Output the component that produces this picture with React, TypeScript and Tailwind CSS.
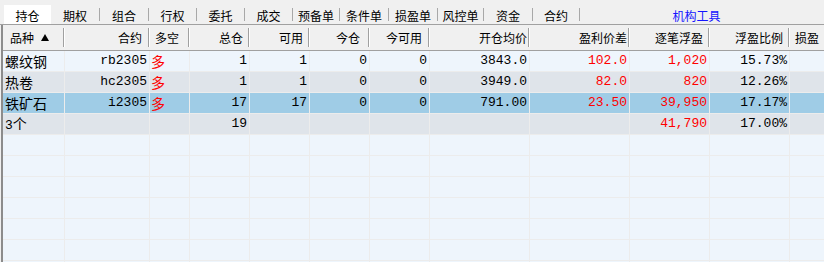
import React from "react";

const CJK = "font-['Noto_Sans_CJK_SC',sans-serif]";
const DATA = "font-['Liberation_Mono','Noto_Sans_CJK_SC',monospace]";

const tabs: { label: string; w: string }[] = [
  { label: "期权", w: "w-[48px]" },
  { label: "组合", w: "w-[48px]" },
  { label: "行权", w: "w-[47px]" },
  { label: "委托", w: "w-[47px]" },
  { label: "成交", w: "w-[47px]" },
  { label: "预备单", w: "w-[46px]" },
  { label: "条件单", w: "w-[48px]" },
  { label: "损盈单", w: "w-[48px]" },
  { label: "风控单", w: "w-[45px]" },
  { label: "资金", w: "w-[48px]" },
  { label: "合约", w: "w-[46px]" },
];

type Col = { label: string; w: string; left?: boolean; pad: string };
const cols: Col[] = [
  { label: "品种", w: "w-[62px]", left: true, pad: "pl-[7px]" },
  { label: "合约", w: "w-[85px]", pad: "pr-[6px]" },
  { label: "多空", w: "w-[40px]", left: true, pad: "pl-[5px]" },
  { label: "总仓", w: "w-[60px]", pad: "pr-[5px]" },
  { label: "可用", w: "w-[60px]", pad: "pr-[5px]" },
  { label: "今仓", w: "w-[60px]", pad: "pr-[8px]" },
  { label: "今可用", w: "w-[60px]", pad: "pr-[6px]" },
  { label: "开仓均价", w: "w-[100px]", pad: "pr-[1px]" },
  { label: "盈利价差", w: "w-[100px]", pad: "pr-[1px]" },
  { label: "逐笔浮盈", w: "w-[80px]", pad: "pr-[5px]" },
  { label: "浮盈比例", w: "w-[80px]", pad: "pr-[5px]" },
  { label: "损盈", w: "w-[60px]", left: true, pad: "pl-[5px]" },
];

type Cell = { t: string; red?: boolean; cjk?: boolean };
type Row = { cells: Cell[]; bg: string };

const PALE = "bg-[#eef5fc]";
const GRAY = "bg-[#dfe4ea]";
const SEL = "bg-[#9fcce6]";

const rows: Row[] = [
  {
    bg: PALE,
    cells: [
      { t: "螺纹钢", cjk: true },
      { t: "rb2305" },
      { t: "多", red: true, cjk: true },
      { t: "1" },
      { t: "1" },
      { t: "0" },
      { t: "0" },
      { t: "3843.0" },
      { t: "102.0", red: true },
      { t: "1,020", red: true },
      { t: "15.73%" },
      { t: "" },
    ],
  },
  {
    bg: GRAY,
    cells: [
      { t: "热卷", cjk: true },
      { t: "hc2305" },
      { t: "多", red: true, cjk: true },
      { t: "1" },
      { t: "1" },
      { t: "0" },
      { t: "0" },
      { t: "3949.0" },
      { t: "82.0", red: true },
      { t: "820", red: true },
      { t: "12.26%" },
      { t: "" },
    ],
  },
  {
    bg: SEL,
    cells: [
      { t: "铁矿石", cjk: true },
      { t: "i2305" },
      { t: "多", red: true, cjk: true },
      { t: "17" },
      { t: "17" },
      { t: "0" },
      { t: "0" },
      { t: "791.00" },
      { t: "23.50", red: true },
      { t: "39,950", red: true },
      { t: "17.17%" },
      { t: "" },
    ],
  },
  {
    bg: GRAY,
    cells: [
      { t: "3个" },
      { t: "" },
      { t: "" },
      { t: "19" },
      { t: "" },
      { t: "" },
      { t: "" },
      { t: "" },
      { t: "" },
      { t: "41,790", red: true },
      { t: "17.00%" },
      { t: "" },
    ],
  },
];

const emptyCells: Cell[] = cols.map(() => ({ t: "" }));
for (let i = 0; i < 7; i++) rows.push({ bg: PALE, cells: emptyCells });

function Separator() {
  return <div className="w-[2px] h-[19px] shrink-0 border-l border-[#a0a0a0] bg-white" />;
}

export default function App() {
  return (
    <div className={`w-[824px] h-[262px] overflow-hidden bg-[#f0f0f0] text-black ${CJK}`}>
      {/* tab bar */}
      <div className="flex items-end h-[25px] border-b border-[#a0a0a0] text-[12px]">
        <div className="w-[4px] shrink-0" />
        <div className="w-[47px] h-[19px] shrink-0 bg-white flex items-center justify-center pt-[2px]">
          持仓
        </div>
        {tabs.map((t) => (
          <React.Fragment key={t.label}>
            <div className={`${t.w} h-[19px] shrink-0 flex items-center justify-center pt-[2px]`}>
              {t.label}
            </div>
            <div className="w-px h-[13px] shrink-0 mb-[3px] bg-[#a8a8a8]" />
          </React.Fragment>
        ))}
        <div className="w-[233px] h-[19px] shrink-0 flex items-center justify-center pt-[2px] text-[#1414ff]">
          机构工具
        </div>
      </div>

      {/* table */}
      <div className="flex">
        <div className="w-px shrink-0" />
        <div className="flex-1 border-l-2 border-[#8c8c8c] overflow-hidden">
          {/* header */}
          <div className="flex h-[26px] border-b border-[#a0a0a0] text-[12px] whitespace-nowrap">
            {cols.map((c, i) => (
              <div key={i} className={`${c.w} shrink-0 flex items-center overflow-hidden`}>
                {c.left ? (
                  <div className={`flex-1 flex items-center ${c.pad}`}>
                    <span>{c.label}</span>
                    {i === 0 && (
                      <svg width="8" height="7" viewBox="0 0 8 7" className="ml-[7px]">
                        <polygon points="4,0 8,7 0,7" fill="#000" />
                      </svg>
                    )}
                  </div>
                ) : (
                  <div className={`flex-1 text-right ${c.pad}`}>{c.label}</div>
                )}
                {i < cols.length - 1 && <Separator />}
              </div>
            ))}
          </div>

          {/* rows */}
          {rows.map((r, ri) => (
            <div key={ri} className={`flex h-[21px] border-b border-[#ececec] ${r.bg}`}>
              {r.cells.map((c, ci) => {
                const col = cols[ci];
                const alignLeft = ci === 0 || ci === 2 || ci === 11;
                return (
                  <div
                    key={ci}
                    className={`${col.w} shrink-0 h-[20px] border-r border-[#ececec] flex items-center overflow-hidden whitespace-nowrap ${
                      alignLeft ? (ci === 2 ? "justify-start pl-px" : "justify-start pl-[2px]") : "justify-end pr-[2px]"
                    } ${c.red ? "text-[#ff0000]" : "text-black"}`}
                  >
                    {c.cjk ? (
                      <span className={`text-[14px] leading-[20px] ${CJK}`}>{c.t}</span>
                    ) : c.t === "3个" ? (
                      <span className="leading-[20px]">
                        <span className={`text-[13px] ${DATA}`}>3</span>
                        <span className={`text-[14px] ${CJK}`}>个</span>
                      </span>
                    ) : (
                      <span className={`text-[13px] leading-[20px] ${DATA}`}>{c.t}</span>
                    )}
                  </div>
                );
              })}
            </div>
          ))}
        </div>
      </div>
    </div>
  );
}
